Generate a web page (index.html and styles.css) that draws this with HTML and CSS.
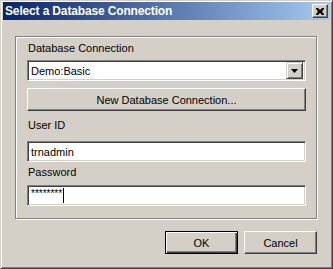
FILE: index.html
```html
<!DOCTYPE html>
<html lang="en">
<head>
    <meta charset="UTF-8">
    <title>Select a Database Connection</title>
    <link rel="stylesheet" href="styles.css">
</head>
<body>

    <div class="window">

        <div class="titlebar">
            <span class="title">Select a Database Connection</span>
            <span class="close">
                <svg width="8" height="7" viewBox="0 0 8 7">
                    <path d="M0 0h2l2 2 2-2h2v1l-2 2.5 2 2.5v1h-2l-2-2-2 2h-2v-1l2-2.5-2-2.5z" fill="#000"/>
                </svg>
            </span>
        </div>

        <div class="content">

            <div class="group">
                <div class="label first">Database Connection</div>
                <div class="combo">
                    <span class="value">Demo:Basic</span>
                    <span class="drop">
                        <svg width="7" height="4" viewBox="0 0 7 4">
                            <path d="M0 0h7l-3.5 4z" fill="#000"/>
                        </svg>
                    </span>
                </div>

                <div class="btn wide">New Database Connection...</div>

                <div class="label userid">User ID</div>
                <div class="field">trnadmin</div>

                <div class="label password">Password</div>
                <div class="field secret"><span class="stars">********</span><span class="caret"></span></div>
            </div>

            <div class="actions">
                <div class="btn default">OK</div>
                <div class="btn">Cancel</div>
            </div>

        </div>
    </div>

</body>
</html>
```

FILE: styles.css
```css
body {
    margin: 0;
    background-color: #d4d0c8;
    font-family: "Liberation Sans", Arial, sans-serif;
    font-size: 11px;
    color: #000;
}

.window {
    width: 333px;
    height: 269px;
    box-sizing: border-box;
    padding: 1px 2px 2px 2px;
    border-top: 1px solid #d4d0c8;
    border-left: 1px solid #d4d0c8;
    border-right: 1px solid #404040;
    border-bottom: 1px solid #404040;
    box-shadow: inset 1px 1px #fff, inset -1px -1px #808080;
    background-color: #d4d0c8;
    display: flex;
    flex-direction: column;
}

.titlebar {
    height: 18px;
    display: flex;
    align-items: center;
    justify-content: space-between;
    padding: 0 2px;
    background: linear-gradient(to right, #0a246a, #a6caf0);
}

.title {
    color: #fff;
    font-weight: bold;
    font-size: 12px;
    letter-spacing: -0.15px;
}

.close {
    width: 16px;
    height: 14px;
    box-sizing: border-box;
    display: flex;
    align-items: center;
    justify-content: center;
    background-color: #d4d0c8;
    border-top: 1px solid #fff;
    border-left: 1px solid #fff;
    border-right: 1px solid #404040;
    border-bottom: 1px solid #404040;
    box-shadow: inset -1px -1px #808080;
}

.content {
    flex: 1;
    display: flex;
    flex-direction: column;
    padding: 16px 13px 0 12px;
}

.group {
    border: 1px solid #808080;
    box-shadow: inset 1px 1px #fff, 1px 1px #fff;
    padding: 5px 10px 12px 11px;
    display: flex;
    flex-direction: column;
}

.label {
    line-height: 13px;
    padding-left: 1px;
}

.userid {
    margin-top: 8px;
}

.password {
    margin-top: 4px;
}

.combo,
.field {
    height: 21px;
    box-sizing: border-box;
    background-color: #fff;
    border-top: 1px solid #808080;
    border-left: 1px solid #808080;
    border-right: 1px solid #fff;
    border-bottom: 1px solid #fff;
    box-shadow: inset 1px 1px #404040, inset -1px -1px #d4d0c8;
    display: flex;
    align-items: center;
}

.combo {
    margin-top: 5px;
    justify-content: space-between;
    padding: 2px;
}

.combo .value {
    padding-left: 1px;
}

.drop {
    width: 17px;
    height: 17px;
    box-sizing: border-box;
    display: flex;
    align-items: center;
    justify-content: center;
    background-color: #d4d0c8;
    border-top: 1px solid #d4d0c8;
    border-left: 1px solid #d4d0c8;
    border-right: 1px solid #404040;
    border-bottom: 1px solid #404040;
    box-shadow: inset 1px 1px #fff, inset -1px -1px #808080;
}

.field {
    padding-left: 3px;
    margin-top: 9px;
}

.secret {
    margin-top: 6px;
    align-items: flex-start;
    padding-top: 2px;
}

.stars {
    font-size: 10px;
    line-height: 12px;
    letter-spacing: 0;
}

.caret {
    width: 1px;
    height: 15px;
    margin-left: 1px;
    background-color: #000;
}

.btn {
    height: 23px;
    box-sizing: border-box;
    display: flex;
    align-items: center;
    justify-content: center;
    background-color: #d4d0c8;
    border-top: 1px solid #fff;
    border-left: 1px solid #fff;
    border-right: 1px solid #404040;
    border-bottom: 1px solid #404040;
    box-shadow: inset -1px -1px #808080;
}

.wide {
    margin-top: 7px;
}

.actions {
    display: flex;
    justify-content: flex-end;
    gap: 6px;
    margin-top: 12px;
    padding-right: 0;
}

.actions .btn {
    width: 73px;
}

.default {
    border: 1px solid #000;
    box-shadow: inset 1px 1px #fff, inset -1px -1px #404040, inset -2px -2px #808080;
}
```
